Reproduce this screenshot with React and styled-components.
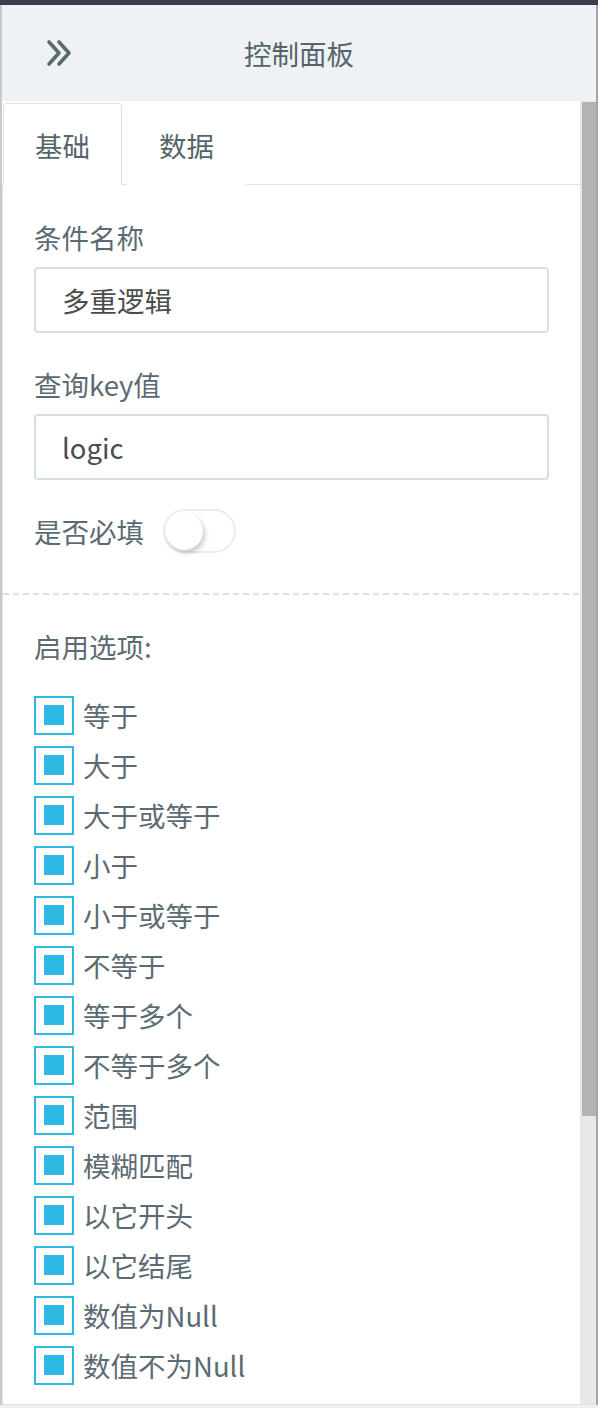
import React from "react";
import styled, { createGlobalStyle } from "styled-components";

const GlobalStyle = createGlobalStyle`
  html, body { margin: 0; padding: 0; background: #f0f0f0; }
  body { font-family: "Noto Sans CJK SC", "Noto Sans", sans-serif; }
  * { box-sizing: border-box; }
`;

const Page = styled.div`
  width: 598px;
  height: 1405px;
  display: flex;
  flex-direction: column;
`;

const TopBar = styled.div`
  height: 5px;
  background: #3a3e4f;
  flex: none;
`;

const Frame = styled.div`
  flex: 1;
  display: flex;
  flex-direction: column;
  border-left: 2px solid #c9c9c9;
  border-right: 2px solid #a5a5a5;
  background: #fff;
  min-height: 0;
`;

const Header = styled.div`
  height: 96px;
  flex: none;
  background: #eef2f4;
  display: grid;
  grid-template-columns: 1fr auto 1fr;
  align-items: center;
`;

const CollapseButton = styled.div`
  padding-left: 43px;
  display: flex;
  align-items: center;
  color: #5b6a70;
`;

const Title = styled.div`
  font-size: 27.5px;
  line-height: 36px;
  color: #56656b;
`;

const Body = styled.div`
  flex: 1;
  display: flex;
  min-height: 0;
  border-bottom: 1px solid #dde3e5;
`;

const Content = styled.div`
  flex: 1;
  display: flex;
  flex-direction: column;
  min-width: 0;
`;

const TabBar = styled.div`
  display: flex;
  padding-top: 2px;
  padding-left: 1px;
  border-bottom: 1px solid #dde3e5;
  border-right: 2px solid #e3e8ea;
`;

const Tab = styled.div`
  height: 82px;
  padding: 0 31px;
  margin-left: ${(p) => (p.$active ? "0" : "5px")};
  display: flex;
  align-items: center;
  font-size: 27.5px;
  color: #56656b;
  background: #fff;
  border: 1px solid ${(p) => (p.$active ? "#dde3e5" : "transparent")};
  border-bottom: none;
  border-radius: 4px 4px 0 0;
  margin-bottom: -1px;
`;

const Pane = styled.div`
  flex: 1;
  border-left: 1px solid #dde3e5;
  border-right: 2px solid #e3e8ea;
  display: flex;
  flex-direction: column;
`;

const Section = styled.div`
  padding: ${(p) => p.$pad};
  display: flex;
  flex-direction: column;
`;

const Label = styled.div`
  font-size: 27.5px;
  line-height: 36px;
  height: 36px;
  color: #5c6b73;
  margin-top: ${(p) => p.$mt || "0"};
  white-space: nowrap;
`;

const TextInput = styled.input`
  margin-top: 12px;
  width: 100%;
  height: 66px;
  border: 2px solid #d6e0e2;
  border-radius: 4px;
  padding: 0 26px;
  font-family: inherit;
  font-size: 27.5px;
  color: #4c4c4c;
  background: #fff;
  outline: none;
`;

const SwitchRow = styled.div`
  margin-top: 29px;
  display: flex;
  align-items: center;
  gap: 19px;
`;

const SwitchTrack = styled.div`
  width: 73px;
  height: 44px;
  border: 2px solid #ececec;
  border-radius: 22px;
  background: #fff;
  display: flex;
  align-items: center;
  padding-left: 1px;
`;

const SwitchKnob = styled.div`
  width: 37px;
  height: 37px;
  border-radius: 50%;
  background: #fff;
  box-shadow: 2px 3px 5px rgba(0, 0, 0, 0.22);
`;

const Divider = styled.div`
  height: 2px;
  background-image: linear-gradient(to right, #dbe2e5 65%, transparent 0);
  background-size: 10px 2px;
  background-repeat: repeat-x;
`;

const OptionList = styled.div`
  margin-top: 26px;
  display: flex;
  flex-direction: column;
`;

const OptionRow = styled.label`
  height: 50px;
  display: flex;
  align-items: center;
  gap: 9px;
  font-size: 27.5px;
  color: #5c6b73;
`;

const CheckBox = styled.span`
  width: 40px;
  height: 39px;
  border: 2px solid #2eb8e4;
  display: flex;
  align-items: center;
  justify-content: center;
  flex: none;
`;

const CheckMark = styled.span`
  width: 20px;
  height: 20px;
  background: #2eb8e4;
`;

const ScrollTrack = styled.div`
  width: 14px;
  flex: none;
  background: #e8e8e8;
  padding-top: 1px;
`;

const ScrollThumb = styled.div`
  height: 1014px;
  background: #b3b3b3;
`;

const options = [
  "等于",
  "大于",
  "大于或等于",
  "小于",
  "小于或等于",
  "不等于",
  "等于多个",
  "不等于多个",
  "范围",
  "模糊匹配",
  "以它开头",
  "以它结尾",
  "数值为Null",
  "数值不为Null",
];

function DoubleChevron() {
  return (
    <svg width="30" height="30" viewBox="0 0 30 30" fill="none">
      <path d="M4 4 L14 15 L4 26" stroke="currentColor" strokeWidth="3.6" strokeLinecap="round" strokeLinejoin="round" />
      <path d="M14 4 L24 15 L14 26" stroke="currentColor" strokeWidth="3.6" strokeLinecap="round" strokeLinejoin="round" />
    </svg>
  );
}

export default function App() {
  return (
    <>
      <GlobalStyle />
      <Page>
        <TopBar />
        <Frame>
          <Header>
            <CollapseButton>
              <DoubleChevron />
            </CollapseButton>
            <Title>控制面板</Title>
            <div />
          </Header>
          <Body>
            <Content>
              <TabBar>
                <Tab $active>基础</Tab>
                <Tab>数据</Tab>
              </TabBar>
              <Pane>
                <Section $pad="34px 31px 40px 31px">
                  <Label>条件名称</Label>
                  <TextInput defaultValue="多重逻辑" readOnly />
                  <Label $mt="33px">查询key值</Label>
                  <TextInput defaultValue="logic" readOnly />
                  <SwitchRow>
                    <Label>是否必填</Label>
                    <SwitchTrack>
                      <SwitchKnob />
                    </SwitchTrack>
                  </SwitchRow>
                </Section>
                <Divider />
                <Section $pad="33px 31px 0 31px">
                  <Label>启用选项:</Label>
                  <OptionList>
                    {options.map((o) => (
                      <OptionRow key={o}>
                        <CheckBox>
                          <CheckMark />
                        </CheckBox>
                        {o}
                      </OptionRow>
                    ))}
                  </OptionList>
                </Section>
              </Pane>
            </Content>
            <ScrollTrack>
              <ScrollThumb />
            </ScrollTrack>
          </Body>
        </Frame>
      </Page>
    </>
  );
}
